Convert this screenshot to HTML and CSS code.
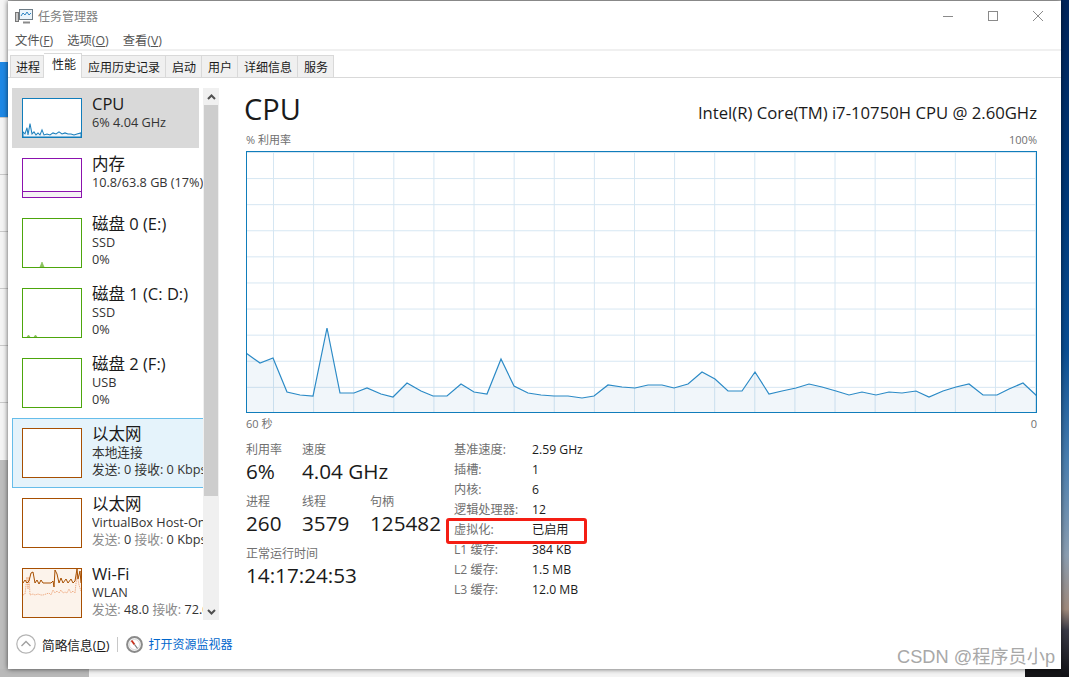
FILE: index.html
```html
<!DOCTYPE html>
<html lang="zh-CN">
<head>
    <meta charset="UTF-8">
    <meta name="viewport" content="width=device-width, initial-scale=1.0">
    <title>任务管理器</title>
    <link rel="stylesheet" href="styles.css">
</head>
<body>
    <div class="desktop">
        <div class="desk-left">
            <div class="desk-blue"></div>
            <div class="desk-row"></div>
            <div class="desk-row"></div>
            <div class="desk-row"></div>
            <div class="desk-row"></div>
            <div class="desk-row"></div>
            <div class="desk-row"></div>
        </div>
        <div class="desk-wall"></div>
        <div class="desk-bottom">
            <div class="desk-page"></div>
            <div class="desk-page2"></div>
        </div>
    </div>

    <div class="window">
        <div class="titlebar">
            <svg class="app-icon" width="18" height="16" viewBox="0 0 18 16">
                <rect x="0.5" y="4.5" width="3" height="9" fill="#c9c9c9" stroke="#777"/>
                <rect x="4.5" y="1.5" width="13" height="10" fill="#eaf4fb" stroke="#6d7c86"/>
                <path d="M6 8 L8 5 L10 7 L12 4 L14 7 L16 5" fill="none" stroke="#2f86c5"/>
                <path d="M8 14.5 H15" stroke="#8a8a8a" stroke-width="2"/>
            </svg>
            <span class="app-name">任务管理器</span>
            <div class="controls">
                <div class="ctrl"><svg width="10" height="10" viewBox="0 0 10 10"><path d="M0 5.5 H10" stroke="#8a8a8a"/></svg></div>
                <div class="ctrl"><svg width="10" height="10" viewBox="0 0 10 10"><rect x="0.5" y="0.5" width="9" height="9" fill="none" stroke="#8a8a8a"/></svg></div>
                <div class="ctrl"><svg width="10" height="10" viewBox="0 0 10 10"><path d="M0 0 L10 10 M10 0 L0 10" stroke="#8a8a8a"/></svg></div>
            </div>
        </div>

        <div class="menubar">
            <span>文件(<u>F</u>)</span>
            <span>选项(<u>O</u>)</span>
            <span>查看(<u>V</u>)</span>
        </div>

        <div class="tabs">
            <div class="tab">进程</div>
            <div class="tab active">性能</div>
            <div class="tab">应用历史记录</div>
            <div class="tab">启动</div>
            <div class="tab">用户</div>
            <div class="tab">详细信息</div>
            <div class="tab">服务</div>
        </div>

        <div class="content">
            <div class="side">
                <div class="list">
                    <div class="item short selected">
                        <svg class="thumb cpu" viewBox="0 0 58 37" preserveAspectRatio="none">
                            <path d="M0 37 V32 L2 34 L4 28 L5 35 L7 24 L9 34 L11 32 L13 35 L15 33 L17 35 L19 30 L21 35 L24 34 L27 35 L30 33 L33 34 L36 32 L39 34 L42 33 L45 34 L48 34 L51 35 L54 34 L58 33 V37 Z" fill="#eef5fa" stroke="#1b7fbd"/>
                        </svg>
                        <div class="info">
                            <div class="name">CPU</div>
                            <div class="sub">6% 4.04 GHz</div>
                        </div>
                    </div>
                    <div class="item short">
                        <svg class="thumb mem" viewBox="0 0 58 38" preserveAspectRatio="none">
                            <rect x="0" y="32" width="58" height="6" fill="#f4f2f4"/>
                            <path d="M0 32.5 H58" stroke="#8b12ae"/>
                        </svg>
                        <div class="info">
                            <div class="name">内存</div>
                            <div class="sub">10.8/63.8 GB (17%)</div>
                        </div>
                    </div>
                    <div class="item">
                        <svg class="thumb disk" viewBox="0 0 58 48" preserveAspectRatio="none">
                            <path d="M17 48 L19 43 L21 48 Z" fill="#8dc462" stroke="#7dbb4c" stroke-width="0.6"/>
                        </svg>
                        <div class="info">
                            <div class="name">磁盘 0 (E:)</div>
                            <div class="sub">SSD</div>
                            <div class="sub">0%</div>
                        </div>
                    </div>
                    <div class="item">
                        <svg class="thumb disk" viewBox="0 0 58 48" preserveAspectRatio="none">
                            <path d="M4 48 L5.5 46 L7 48 Z M11 48 L12.5 46 L14 48 Z" fill="#8dc462" stroke="#7dbb4c" stroke-width="0.6"/>
                        </svg>
                        <div class="info">
                            <div class="name">磁盘 1 (C: D:)</div>
                            <div class="sub">SSD</div>
                            <div class="sub">0%</div>
                        </div>
                    </div>
                    <div class="item">
                        <svg class="thumb disk" viewBox="0 0 58 48"></svg>
                        <div class="info">
                            <div class="name">磁盘 2 (F:)</div>
                            <div class="sub">USB</div>
                            <div class="sub">0%</div>
                        </div>
                    </div>
                    <div class="item hovered">
                        <svg class="thumb net" viewBox="0 0 58 48"></svg>
                        <div class="info">
                            <div class="name">以太网</div>
                            <div class="sub">本地连接</div>
                            <div class="sub"><span class="dim">发送:</span> 0 <span class="dim">接收:</span> 0 Kbps</div>
                        </div>
                    </div>
                    <div class="item">
                        <svg class="thumb net" viewBox="0 0 58 48"></svg>
                        <div class="info">
                            <div class="name">以太网</div>
                            <div class="sub">VirtualBox Host-Only</div>
                            <div class="sub"><span class="gray">发送:</span> 0 <span class="gray">接收:</span> 0 Kbps</div>
                        </div>
                    </div>
                    <div class="item">
                        <svg class="thumb net wifi" viewBox="0 0 58 48" preserveAspectRatio="none">
                            <path d="M0 26 L2 25 L4 8 L5 20 L6 8 L7 26 L10 25 L12 26 L15 25 L18 26 L20 26 L23 25 L26 24 L28 26 L30 21 L32 24 L34 22 L36 24 L38 21 L40 24 L42 23 L44 24 L46 20 L48 24 L50 22 L52 24 L54 5 L56 16 L58 22" fill="none" stroke="#eb9b6b" stroke-width="0.8" stroke-dasharray="1.4 0.8"/>
                            <path d="M0 14 L2 11 L4 14 L6 12 L8 4 L10 3 L12 14 L14 11 L16 15 L18 11 L20 14 L24 14 L28 14 L30 12 L31 18 L32 1 L34 5 L36 14 L38 9 L40 14 L43 10 L45 14 L48 10 L50 14 L52 12 L54 0 L55 10 L57 2 L58 14" fill="none" stroke="#a74f01"/>
                        </svg>
                        <div class="info">
                            <div class="name">Wi-Fi</div>
                            <div class="sub">WLAN</div>
                            <div class="sub"><span class="gray">发送:</span> 48.0 <span class="gray">接收:</span> 72.0 Kbps</div>
                        </div>
                    </div>
                </div>
                <div class="scrollbar">
                    <svg class="arrow" width="9" height="6" viewBox="0 0 9 6"><path d="M1 5 L4.5 1.5 L8 5" fill="none" stroke="#505050" stroke-width="2"/></svg>
                    <div class="scroll-thumb"></div>
                    <svg class="arrow" width="9" height="6" viewBox="0 0 9 6"><path d="M1 1 L4.5 4.5 L8 1" fill="none" stroke="#505050" stroke-width="2"/></svg>
                </div>
            </div>

            <div class="main">
                <div class="head">
                    <div class="big-title">CPU</div>
                    <div class="model">Intel(R) Core(TM) i7-10750H CPU @ 2.60GHz</div>
                </div>
                <div class="graph-label">
                    <span>% 利用率</span>
                    <span>100%</span>
                </div>
                <div class="graph">
                    <svg class="plot" viewBox="247 152 789 260" preserveAspectRatio="none">
                        <polygon class="plot-fill" points="246,413 246,353 260,363 273,358 287,392 300,395 313,396 327,328 340,393 354,393 367,388 381,394 393,397 407,383 421,391 433,396 447,396 461,384 474,392 487,394 501,359 514,386 528,393 541,395 554,396 568,396 582,398 594,396 608,385 622,387 635,388 648,385 662,385 674,388 688,384 702,372 715,379 728,391 742,391 755,372 769,394 782,391 796,388 809,384 822,387 836,391 849,395 862,392 876,395 889,392 902,393 916,391 929,397 943,391 956,387 969,384 983,395 997,395 1009,389 1023,383 1037,396 1037,413"/>
                        <polyline class="plot-line" points="246,353 260,363 273,358 287,392 300,395 313,396 327,328 340,393 354,393 367,388 381,394 393,397 407,383 421,391 433,396 447,396 461,384 474,392 487,394 501,359 514,386 528,393 541,395 554,396 568,396 582,398 594,396 608,385 622,387 635,388 648,385 662,385 674,388 688,384 702,372 715,379 728,391 742,391 755,372 769,394 782,391 796,388 809,384 822,387 836,391 849,395 862,392 876,395 889,392 902,393 916,391 929,397 943,391 956,387 969,384 983,395 997,395 1009,389 1023,383 1037,396"/>
                    </svg>
                </div>
                <div class="graph-axis">
                    <span>60 秒</span>
                    <span>0</span>
                </div>

                <div class="details">
                    <div class="stats">
                        <div class="stat"><div class="stat-label">利用率</div><div class="stat-value">6%</div></div>
                        <div class="stat wide"><div class="stat-label">速度</div><div class="stat-value">4.04 GHz</div></div>
                        <div class="stat"><div class="stat-label">进程</div><div class="stat-value">260</div></div>
                        <div class="stat"><div class="stat-label">线程</div><div class="stat-value">3579</div></div>
                        <div class="stat"><div class="stat-label">句柄</div><div class="stat-value">125482</div></div>
                        <div class="stat full"><div class="stat-label">正常运行时间</div><div class="stat-value">14:17:24:53</div></div>
                    </div>
                    <div class="specs">
                        <span class="spec-key">基准速度:</span><span>2.59 GHz</span>
                        <span class="spec-key">插槽:</span><span>1</span>
                        <span class="spec-key">内核:</span><span>6</span>
                        <span class="spec-key">逻辑处理器:</span><span>12</span>
                        <span class="spec-key">虚拟化:</span><span>已启用</span>
                        <span class="spec-key">L1 缓存:</span><span>384 KB</span>
                        <span class="spec-key">L2 缓存:</span><span>1.5 MB</span>
                        <span class="spec-key">L3 缓存:</span><span>12.0 MB</span>
                        <div class="red-box"></div>
                    </div>
                </div>
            </div>
        </div>

        <div class="footer">
            <svg class="less-icon" width="20" height="20" viewBox="0 0 20 20">
                <circle cx="10" cy="10" r="9.2" fill="#fff" stroke="#b4b4b4" stroke-width="1.2"/>
                <path d="M5.5 12 L10 7.5 L14.5 12" fill="none" stroke="#a0a0a0" stroke-width="1.4"/>
            </svg>
            <span class="less-text">简略信息(<u>D</u>)</span>
            <div class="foot-sep"></div>
            <svg class="gauge-icon" width="17" height="17" viewBox="0 0 17 17">
                <circle cx="8.5" cy="8.5" r="7.4" fill="#f2f2f2" stroke="#8a8a8a" stroke-width="2"/>
                <circle cx="8.5" cy="8.5" r="5" fill="#fff" stroke="#c8c8c8" stroke-width="0.6"/>
                <path d="M5.5 4.5 L8.5 8.5" stroke="#c8321e" stroke-width="1.8"/>
                <path d="M8.5 8.5 L11.5 12.5" stroke="#777" stroke-width="1.2"/>
            </svg>
            <span class="monitor-link">打开资源监视器</span>
        </div>

        <div class="watermark">CSDN @程序员小p</div>
    </div>
</body>
</html>
```

FILE: styles.css
```css
html, body {
    margin: 0;
    padding: 0;
    height: 100%;
    overflow: hidden;
}
body {
    font-family: "Open Sans", "Noto Sans CJK SC", sans-serif;
    font-size: 12px;
    color: #1a1a1a;
    background: #bdbdbd;
}

/* what shows behind the window */
.desktop {
    position: absolute;
    inset: 0;
}
.desk-left {
    position: absolute;
    left: 0;
    top: 0;
    width: 8px;
    height: 460px;
    padding-top: 62px;
    box-sizing: border-box;
    background: #f5f5f5;
}
.desk-blue {
    height: 55px;
    background: #1e88e5;
}
.desk-row {
    height: 57px;
    border-top: 1px solid #c9c9c9;
    box-sizing: border-box;
    background: #f4f4f4;
}
.desk-wall {
    position: absolute;
    right: 0;
    top: 0;
    width: 8px;
    height: 677px;
    background: linear-gradient(#00245a 0, #003a7a 30%, #0b4f94 52%, #4a7fb0 68%, #8c9fb2 82%, #a08a7c 90%, #3c3c48 93%, #101014 100%);
}
.desk-bottom {
    position: absolute;
    left: 0;
    right: 8px;
    bottom: 0;
    height: 8px;
    background: #151518;
}
.desk-page {
    position: absolute;
    left: 0;
    top: 0;
    bottom: 0;
    width: 89px;
    background: #b9b9b9;
}
.desk-page2 {
    position: absolute;
    left: 89px;
    top: 0;
    bottom: 0;
    width: 936px;
    background: #f4f4f4;
}

.window {
    position: absolute;
    left: 8px;
    top: 1px;
    width: 1053px;
    height: 668px;
    display: flex;
    flex-direction: column;
    background: #fff;
    box-shadow: 0 0 5px rgba(0, 0, 0, 0.65);
    overflow: hidden;
}

.titlebar {
    height: 29px;
    flex: none;
    display: flex;
    align-items: center;
    padding-left: 7px;
}
.app-icon {
    margin-right: 5px;
}
.app-name {
    color: #808080;
}
.controls {
    margin-left: auto;
    display: flex;
}
.ctrl {
    width: 45px;
    height: 29px;
    display: flex;
    align-items: center;
    justify-content: center;
}
.ctrl:last-child {
    width: 46px;
}

.menubar {
    height: 19px;
    flex: none;
    display: flex;
    align-items: center;
    gap: 14px;
    padding-left: 7px;
    font-size: 12.3px;
    color: #555;
    border-bottom: 2px solid #f0f0f0;
}

.tabs {
    height: 26px;
    flex: none;
    display: flex;
    align-items: flex-end;
    padding-left: 2px;
    border-bottom: 1px solid #d9d9d9;
}
.tab {
    height: 22px;
    line-height: 23px;
    padding: 0 5px 0 6px;
    box-sizing: border-box;
    background: #f0f0f0;
    border-top: 1px solid #d9d9d9;
    border-right: 1px solid #d9d9d9;
    white-space: nowrap;
}
.tab:first-child {
    border-left: 1px solid #d9d9d9;
    padding: 0 3px 0 5px;
}
.tab.active {
    height: 25px;
    line-height: 22px;
    padding: 0 5px 0 8px;
    background: #fff;
    margin-bottom: -1px;
    position: relative;
}

.content {
    flex: 1;
    min-height: 0;
    display: flex;
}

.side {
    width: 211px;
    flex: none;
    display: flex;
    padding: 10px 0 8px 4px;
    box-sizing: border-box;
}
.list {
    width: 191px;
    overflow: hidden;
}
.item {
    height: 70px;
    box-sizing: border-box;
    padding: 10px 0 0 10px;
    display: flex;
    gap: 10px;
    white-space: nowrap;
}
.item.short {
    height: 60px;
}
.item.selected {
    width: 187px;
    background: #d9d9d9;
}
.item.hovered {
    width: 200px; /* runs on under the scrollbar */
    background: #e5f3fb;
    box-shadow: inset 0 0 0 1px #66bdea;
}
.thumb {
    flex: none;
    width: 60px;
    height: 50px;
    box-sizing: border-box;
    border: 1px solid #4da60c;
    background: #fff;
}
.item.short .thumb {
    height: 40px;
}
.thumb.cpu {
    border: 1px solid #117dbb;
}
.thumb.mem {
    border: 1px solid #8b12ae;
}
.thumb.net {
    border: 1px solid #a74f01;
}
.thumb.wifi {
    background: #fcf3eb;
}
.info {
    width: 111px;
    overflow: hidden;
    margin-top: -5px;
}
.name {
    font-size: 16.5px;
    line-height: 21px;
}
.sub {
    font-size: 12.7px;
    line-height: 17px;
    color: #333;
}
.dim {
    color: #333;
}
.gray {
    color: #8a8a8a;
}

.scrollbar {
    width: 16px;
    flex: none;
    background: #f0f0f0;
    display: flex;
    flex-direction: column;
    align-items: center;
}
.arrow {
    flex: none;
    margin: 6px 0 5px;
}
.scroll-thumb {
    width: 14px;
    height: 391px;
    background: #cdcdcd;
    margin-bottom: auto;
}

.main {
    flex: 1;
    min-width: 0;
    padding: 0 24px 0 27px;
    display: flex;
    flex-direction: column;
}
.head {
    display: flex;
    justify-content: space-between;
    align-items: flex-start;
    height: 52px;
    box-sizing: border-box;
    padding-top: 9px;
    margin-left: -2px;
}
.big-title {
    font-size: 29px;
    line-height: 43px;
}
.model {
    font-size: 16.7px;
    line-height: 20px;
    margin-top: 16px;
}
.graph-label, .graph-axis {
    display: flex;
    justify-content: space-between;
    font-size: 11px;
    color: #707070;
}
.graph-label {
    height: 21px;
    line-height: 20px;
}
.graph-axis {
    height: 30px;
    line-height: 21px;
}
.graph {
    height: 262px;
    box-sizing: border-box;
    border: 1px solid #117dbb;
    background-color: #fff;
    background-image:
        linear-gradient(90deg, #d5e6f2 1px, transparent 1px),
        linear-gradient(#d5e6f2 1px, transparent 1px);
    background-size: 40.12px 100%, 100% 26.1px;
    background-position: 26px 0, 0 0;
}
.plot {
    display: block;
    width: 100%;
    height: 100%;
    overflow: hidden;
}
.plot-fill {
    fill: rgba(17, 100, 170, 0.06);
}
.plot-line {
    fill: none;
    stroke: #2b8ac6;
    stroke-width: 1.2;
}

.details {
    display: flex;
}
.stats {
    width: 208px;
    flex: none;
    display: grid;
    grid-template-columns: 56px 68px auto;
    grid-auto-rows: 52px;
    align-content: start;
}
.stat {
    white-space: nowrap;
}
.stat.wide {
    grid-column: span 2;
}
.stat.full {
    grid-column: 1 / -1;
}
.stat-label {
    font-size: 12px;
    line-height: 14px;
    color: #707070;
}
.stat-value {
    font-size: 20.7px;
    line-height: 29px;
}
.specs {
    position: relative;
    display: grid;
    grid-template-columns: 78px auto;
    grid-auto-rows: 20px;
    align-content: start;
    font-size: 12.2px;
    line-height: 14px;
}
.spec-key {
    color: #707070;
}
.red-box {
    position: absolute;
    left: -8px;
    top: 75px;
    width: 141px;
    height: 26px;
    box-sizing: border-box;
    border: 3px solid #f41e14;
    border-radius: 3px;
}

.footer {
    height: 41px;
    flex: none;
    display: flex;
    align-items: center;
    padding: 0 0 9px 8px;
    box-sizing: border-box;
}
.less-text {
    margin-left: 6px;
    font-size: 12.7px;
}
.foot-sep {
    width: 1px;
    height: 15px;
    background: #c8c8c8;
    margin: 0 8px;
}
.monitor-link {
    margin-left: 5px;
    color: #0066cc;
}

.watermark {
    position: absolute;
    right: 6px;
    bottom: 1px;
    font-family: "Liberation Sans", "Noto Sans CJK SC", sans-serif;
    font-size: 18.2px;
    color: #a8a8a8;
}
```
